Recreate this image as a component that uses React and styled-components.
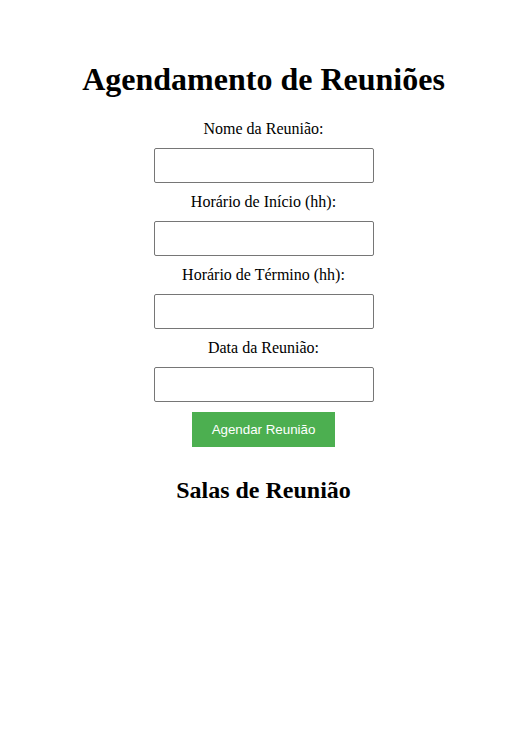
import React, { useState } from "react";
import styled, { createGlobalStyle } from "styled-components";

const GlobalStyle = createGlobalStyle`
  body {
    margin: 0;
    background: #ffffff;
    font-family: "Liberation Serif", "Times New Roman", serif;
    color: #000000;
  }
`;

const Page = styled.div`
  padding: 40px 0 0 16px;
  text-align: center;
`;

const Title = styled.h1`
  font-size: 32px;
  font-weight: bold;
  margin: 21.44px 0;
`;

const Form = styled.form`
  display: flex;
  flex-direction: column;
  align-items: center;
`;

const Label = styled.label`
  display: block;
  font-size: 16px;
  line-height: normal;
  margin-bottom: 10px;
`;

const Input = styled.input`
  box-sizing: border-box;
  width: 220px;
  height: 35px;
  margin: 0 0 10px;
  padding: 0 8px;
  border: 1px solid #767676;
  border-radius: 2px;
  font-size: 16px;
  background: #ffffff;
`;

const Button = styled.button`
  box-sizing: border-box;
  height: 35px;
  margin: 0 0 10px;
  padding: 0 20px;
  border: none;
  background-color: #4caf50;
  color: #ffffff;
  font-family: "Liberation Sans", Arial, sans-serif;
  font-size: 13.333px;
  white-space: nowrap;
  cursor: pointer;
`;

const SectionTitle = styled.h2`
  font-size: 24px;
  font-weight: bold;
  margin: 19.92px 0;
`;

const fields = [
  { id: "nome", label: "Nome da Reunião:" },
  { id: "inicio", label: "Horário de Início (hh):" },
  { id: "termino", label: "Horário de Término (hh):" },
  { id: "data", label: "Data da Reunião:" },
];

const App = () => {
  const [values, setValues] = useState({});

  const handleChange = (id) => (e) => {
    setValues((prev) => ({ ...prev, [id]: e.target.value }));
  };

  return (
    <>
      <GlobalStyle />
      <Page>
        <Title>Agendamento de Reuniões</Title>
        <Form onSubmit={(e) => e.preventDefault()}>
          {fields.map((field) => (
            <React.Fragment key={field.id}>
              <Label htmlFor={field.id}>{field.label}</Label>
              <Input
                id={field.id}
                type="text"
                value={values[field.id] || ""}
                onChange={handleChange(field.id)}
              />
            </React.Fragment>
          ))}
          <Button type="submit">Agendar Reunião</Button>
        </Form>
        <SectionTitle>Salas de Reunião</SectionTitle>
      </Page>
    </>
  );
};

export default App;
